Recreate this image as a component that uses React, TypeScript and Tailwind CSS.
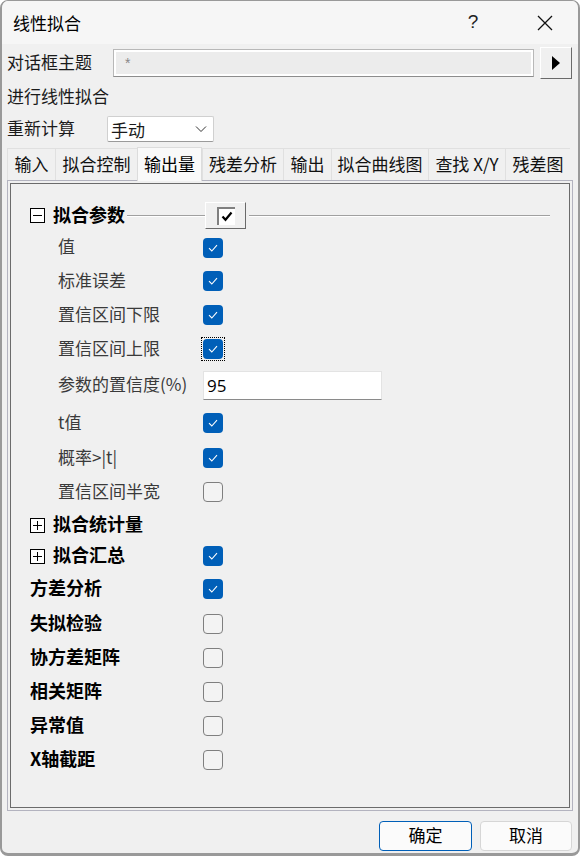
import React from "react";

const cjk = { fontFamily: '"Noto Sans CJK SC", "Noto Sans", sans-serif' };

function Check({ on, focus }: { on?: boolean; focus?: boolean }) {
  const box = on ? (
    <div className="w-[20px] h-[20px] rounded-[4px] bg-[#005fb8] flex items-center justify-center">
      <svg width="12" height="10" viewBox="0 0 12 10">
        <path d="M2 5.2 L4.8 8 L10 2.2" fill="none" stroke="white" strokeWidth="1.1" />
      </svg>
    </div>
  ) : (
    <div className="w-[20px] h-[20px] rounded-[4px] border border-[#7f7f7f] bg-[#f3f3f3]" />
  );
  if (focus) {
    return <div className="p-[1px] border border-dotted border-black -m-[2px]">{box}</div>;
  }
  return box;
}

function Expander({ open }: { open?: boolean }) {
  return (
    <div className="w-[15px] h-[15px] border border-black bg-white relative shrink-0">
      <div className="absolute left-[2px] right-[2px] top-[6px] h-[1px] bg-black" />
      {!open && <div className="absolute top-[2px] bottom-[2px] left-[6px] w-[1px] bg-black" />}
    </div>
  );
}

type Row = {
  label: string;
  h: number;
  kind: "sub" | "top" | "group";
  check?: boolean | null;
  focus?: boolean;
  input?: string;
};

const rows: Row[] = [
  { label: "值", h: 33, kind: "sub", check: true },
  { label: "标准误差", h: 34, kind: "sub", check: true },
  { label: "置信区间下限", h: 34, kind: "sub", check: true },
  { label: "置信区间上限", h: 34, kind: "sub", check: true, focus: true },
  { label: "参数的置信度(%)", h: 39, kind: "sub", input: "95" },
  { label: "t值", h: 36, kind: "sub", check: true },
  { label: "概率>|t|", h: 34, kind: "sub", check: true },
  { label: "置信区间半宽", h: 34, kind: "sub", check: false },
  { label: "拟合统计量", h: 32, kind: "group", check: null },
  { label: "拟合汇总", h: 30, kind: "group", check: true },
  { label: "方差分析", h: 36, kind: "top", check: true },
  { label: "失拟检验", h: 34, kind: "top", check: false },
  { label: "协方差矩阵", h: 34, kind: "top", check: false },
  { label: "相关矩阵", h: 34, kind: "top", check: false },
  { label: "异常值", h: 34, kind: "top", check: false },
  { label: "X轴截距", h: 34, kind: "top", check: false },
];

const tabs = [
  { t: "输入", w: 48 },
  { t: "拟合控制", w: 82 },
  { t: "输出量", w: 65, active: true },
  { t: "残差分析", w: 81 },
  { t: "输出", w: 48 },
  { t: "拟合曲线图", w: 97 },
  { t: "查找 X/Y", w: 77 },
  { t: "残差图", w: 65 },
];

export default function App() {
  return (
    <div className="w-[580px] h-[856px] bg-[#f0f0f0] border-l-2 border-r-2 border-b-[3px] border-t border-[#999999] rounded-[8px] overflow-hidden flex flex-col text-[#1a1a1a]" style={cjk}>
      {/* title bar */}
      <div className="h-[43px] bg-[#f6f6f6] flex items-center pl-[11px] shrink-0">
        <span className="text-[17px] text-black">线性拟合</span>
        <span className="ml-auto w-[20px] text-center text-[19px] text-[#222]" style={{ fontFamily: '"Liberation Sans", sans-serif' }}>?</span>
        <svg className="ml-[54px] mr-[25px]" width="16" height="16" viewBox="0 0 16 16">
          <path d="M1 1 L15 15 M15 1 L1 15" stroke="#111" strokeWidth="1.3" />
        </svg>
      </div>

      {/* theme row */}
      <div className="flex items-center h-[38px] pl-[5px] pr-[6px]">
        <span className="w-[106px] text-[17px] -mt-[3px]">对话框主题</span>
        <div className="flex-1 h-[28px] border border-[#b8b8b8] border-b-[#8d8d8d] p-[2px] bg-white">
          <div className="h-full bg-[#ececec] pl-[9px] text-[14px] text-[#888] leading-[22px]" style={{ fontFamily: '"Liberation Sans", sans-serif' }}>*</div>
        </div>
        <div className="ml-[6px] w-[32px] h-[32px] border border-t-white border-l-white border-r-[#6a6a6a] border-b-[#6a6a6a] bg-[#f0f0f0] flex items-center justify-center">
          <svg width="10" height="14" viewBox="0 0 10 14">
            <path d="M1 0 L9 7 L1 14 Z" fill="black" />
          </svg>
        </div>
      </div>

      <div className="h-[30px] flex items-center pl-[5px] text-[17px] pb-[2px]">进行线性拟合</div>

      <div className="h-[34px] flex items-center pl-[5px]">
        <span className="w-[100px] text-[17px] -mt-[2px]">重新计算</span>
        <div className="w-[107px] h-[26px] bg-white border border-[#d0d0d0] border-b-[#9a9a9a] rounded-[2px] flex items-center pl-[3px] pr-[6px]">
          <span className="text-[17px] leading-none">手动</span>
          <svg className="ml-auto" width="12" height="8" viewBox="0 0 12 8">
            <path d="M1 1.5 L6 6.5 L11 1.5" fill="none" stroke="#333" strokeWidth="1" />
          </svg>
        </div>
      </div>

      {/* tabs */}
      <div className="flex items-end h-[34px] pl-[5px] relative z-10">
        {tabs.map((tb) => (
          <div
            key={tb.t}
            className={
              tb.active
                ? "h-[34px] bg-[#f9f9f9] border-t border-l border-r border-[#dcdcdc] -mb-[1px] flex items-center justify-center text-[17px] text-black shrink-0 pb-[1px]"
                : "h-[32px] bg-[#f0f0f0] border-t border-l border-[#e0e0e0] flex items-center justify-center text-[17px] text-[#111] shrink-0 pb-[2px]"
            }
            style={{ width: tb.w }}
          >
            {tb.t}
          </div>
        ))}
      </div>

      {/* panel */}
      <div className="mx-[5px] h-[631px] border border-[#b3b3bf] p-[2px]">
        <div className="h-full border border-[#6b6b6b] pt-[16px] pl-[19px] pr-[19px]">
          {/* group header */}
          <div className="h-[31px] flex items-center">
            <div className="w-[175px] flex items-center">
              <Expander open />
              <span className="ml-[8px] text-[18px] font-bold text-black -mt-[2px]">拟合参数</span>
              <div className="flex-1 ml-[2px] h-[2px] border-t border-[#a0a0a0] border-b border-b-white" />
            </div>
            <div className="w-[41px] h-[27px] bg-[#f0f0f0] border border-t-white border-l-white border-r-[#6a6a6a] border-b-[#6a6a6a] flex items-center justify-center">
              <div className="w-[18px] h-[18px] bg-white border-l-2 border-t-2 border-[#808080] flex items-center justify-center">
                <svg width="12" height="11" viewBox="0 0 12 11">
                  <path d="M1.5 5.5 L4.5 8.8 L10.5 1.5" fill="none" stroke="black" strokeWidth="2.2" />
                </svg>
              </div>
            </div>
            <div className="flex-1 ml-[3px] h-[2px] border-t border-[#a0a0a0] border-b border-b-white" />
          </div>

          {rows.map((r) => (
            <div key={r.label} className="flex items-center" style={{ height: r.h }}>
              <div className="w-[173px] flex items-center shrink-0">
                {r.kind === "group" && <Expander />}
                <span
                  className={
                    r.kind === "sub"
                      ? "pl-[28px] text-[17px] text-[#3a3a3a] -mt-[3px]"
                      : r.kind === "group"
                      ? "ml-[8px] text-[18px] font-bold text-black -mt-[3px]"
                      : "text-[18px] font-bold text-black -mt-[3px]"
                  }
                >
                  {r.label}
                </span>
              </div>
              {r.input !== undefined ? (
                <div className="w-[179px] h-[29px] bg-white border border-[#e3e3e3] border-b-[#8a8a8a] flex items-center pl-[3px] text-[17px] text-black" style={{ fontFamily: '"Open Sans", "Noto Sans", sans-serif' }}>
                  {r.input}
                </div>
              ) : r.check === null ? null : (
                <Check on={!!r.check} focus={r.focus} />
              )}
            </div>
          ))}
        </div>
      </div>

      {/* buttons */}
      <div className="flex justify-end gap-[8px] pr-[6px] mt-[10px]">
        <div className="w-[93px] h-[30px] rounded-[4px] border border-[#005fb8] bg-[#fbfbfb] flex items-center justify-center text-[17px] text-black pb-[2px]">确定</div>
        <div className="w-[92px] h-[30px] rounded-[4px] border border-[#d6d6d6] bg-[#fbfbfb] flex items-center justify-center text-[17px] text-black pb-[2px]">取消</div>
      </div>
    </div>
  );
}
